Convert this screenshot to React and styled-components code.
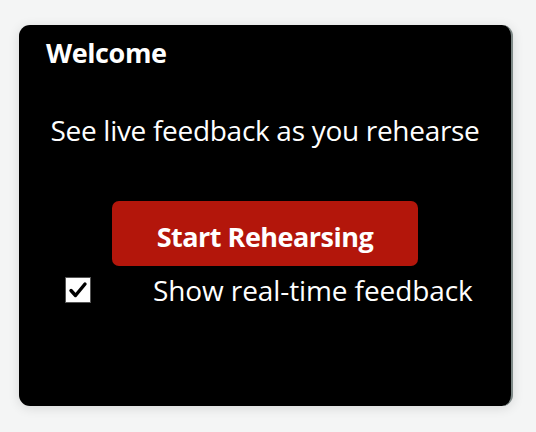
import React, { useState } from 'react';
import styled, { createGlobalStyle } from 'styled-components';

const GlobalStyle = createGlobalStyle`
  html, body {
    margin: 0;
    padding: 0;
    background: #f4f5f5;
    font-family: "Open Sans", "Noto Sans", sans-serif;
  }
`;

export default function App() {
  const [checked, setChecked] = useState(true);

  return (
    <>
      <GlobalStyle />
      <Page>
        <Card>
          <Title>Welcome</Title>
          <Subtitle>See live feedback as you rehearse</Subtitle>
          <StartButton>Start Rehearsing</StartButton>
          <CheckRow onClick={() => setChecked(!checked)}>
            <Box>
              {checked && (
                <svg width="20" height="18" viewBox="0 0 20 18">
                  <path
                    d="M3 9.5 L7.5 14.5 L17 3"
                    fill="none"
                    stroke="#000"
                    strokeWidth="3.4"
                    strokeLinecap="round"
                    strokeLinejoin="round"
                  />
                </svg>
              )}
            </Box>
            <Label>Show real-time feedback</Label>
          </CheckRow>
        </Card>
      </Page>
    </>
  );
}

const Page = styled.div`
  width: 536px;
  height: 432px;
  padding: 25px 0 0 19px;
  box-sizing: border-box;
`;

const Card = styled.div`
  width: 494px;
  height: 381px;
  box-sizing: border-box;
  background: #000;
  border-radius: 11px;
  border-right: 2px solid #7f8a88;
  box-shadow: 0 2px 12px rgba(0, 0, 0, 0.12);
  padding: 13px 27px 0 27px;
  display: flex;
  flex-direction: column;
  color: #fff;
`;

const Title = styled.div`
  font-size: 27px;
  font-weight: 700;
  line-height: 30px;
  letter-spacing: -0.4px;
`;

const Subtitle = styled.div`
  margin-top: 46px;
  text-align: center;
  font-size: 28px;
  line-height: 32px;
  letter-spacing: -0.3px;
  white-space: nowrap;
`;

const StartButton = styled.button`
  align-self: center;
  margin-top: 55px;
  width: 306px;
  height: 65px;
  padding: 5px 0 0;
  border: none;
  border-radius: 7px;
  background: #b3160b;
  color: #fff;
  font-family: inherit;
  font-size: 27px;
  font-weight: 700;
  letter-spacing: -0.5px;
  cursor: pointer;
`;

const CheckRow = styled.label`
  display: flex;
  align-items: center;
  margin-top: 8px;
  padding-left: 19px;
  cursor: pointer;
`;

const Box = styled.span`
  width: 26px;
  height: 26px;
  box-sizing: border-box;
  background: #fff;
  border: 1px solid #555;
  display: flex;
  align-items: center;
  justify-content: center;
`;

const Label = styled.span`
  margin-left: 62px;
  font-size: 28px;
  line-height: 32px;
  letter-spacing: -0.1px;
  white-space: nowrap;
`;
